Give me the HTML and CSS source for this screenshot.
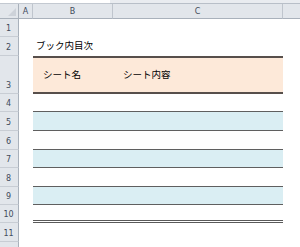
FILE: index.html
```html
<!DOCTYPE html>
<html lang="ja">
<head>
<meta charset="utf-8">
<link rel="stylesheet" href="styles.css">
</head>
<body>
<div class="sheet">
  <div class="topbar"><div class="namebox"></div><div class="fbar"></div></div>
  <div class="row colhdr">
    <div class="hc corner"><span class="tri"></span></div>
    <div class="hc">A</div>
    <div class="hc">B</div>
    <div class="hc">C</div>
    <div class="hc last"></div>
  </div>
  <div class="row r18"><div class="rh">1</div><div></div><div></div><div></div><div></div></div>
  <div class="row r19"><div class="rh">2</div><div></div><div class="title">ブック内目次</div><div></div><div></div></div>
  <div class="row r38"><div class="rh rh3">3</div><div></div><div class="th">シート名</div><div class="th">シート内容</div><div></div></div>
  <div class="row r18"><div class="rh">4</div><div></div><div class="td"></div><div class="td"></div><div></div></div>
  <div class="row r19"><div class="rh">5</div><div></div><div class="td blue"></div><div class="td blue"></div><div></div></div>
  <div class="row r19"><div class="rh">6</div><div></div><div class="td"></div><div class="td"></div><div></div></div>
  <div class="row r18"><div class="rh">7</div><div></div><div class="td blue"></div><div class="td blue"></div><div></div></div>
  <div class="row r19"><div class="rh">8</div><div></div><div class="td"></div><div class="td"></div><div></div></div>
  <div class="row r18"><div class="rh">9</div><div></div><div class="td blue"></div><div class="td blue"></div><div></div></div>
  <div class="row r18"><div class="rh">10</div><div></div><div class="td end"></div><div class="td end"></div><div></div></div>
  <div class="row r19"><div class="rh">11</div><div></div><div></div><div></div><div></div></div>
  <div class="row r19"><div class="rh"></div><div></div><div></div><div></div><div></div></div>
</div>
</body>
</html>
```

FILE: styles.css
```css
html, body {
  margin: 0;
  padding: 0;
  background: #ffffff;
}
.sheet {
  width: 300px;
  height: 247px;
  overflow: hidden;
  font-family: "Noto Sans CJK JP", "DejaVu Sans", sans-serif;
}
.topbar {
  display: flex;
  height: 4px;
}
.namebox {
  width: 110px;
  box-sizing: border-box;
  background: #ffffff;
  border-bottom: 1px solid #c3c9d1;
}
.fbar {
  flex: 1;
  background: #e9ecf0;
  border-bottom: 1px solid #b8bfc8;
}
.row {
  display: grid;
  grid-template-columns: 19px 14px 80px 170px 1fr;
}
.colhdr {
  height: 15px;
}
.hc {
  box-sizing: border-box;
  background: #e2e6eb;
  border-right: 1px solid #bfc5cd;
  border-bottom: 1px solid #a9b1bb;
  font-family: "DejaVu Sans", sans-serif;
  font-size: 8px;
  color: #3f4b5b;
  display: flex;
  align-items: center;
  justify-content: center;
}
.hc.last {
  border-right: none;
}
.corner {
  position: relative;
  border-right-color: #a9b1bb;
}
.tri {
  position: absolute;
  right: 2px;
  bottom: 2px;
  width: 0;
  height: 0;
  border-left: 8px solid transparent;
  border-bottom: 8px solid #cdd2d9;
}
.r18 { height: 18px; }
.r19 { height: 19px; }
.r38 { height: 38px; }
.rh {
  box-sizing: border-box;
  background: #e2e6eb;
  border-right: 1px solid #a9b1bb;
  border-bottom: 1px solid #c8cdd4;
  font-family: "DejaVu Sans", sans-serif;
  font-size: 8px;
  color: #3f4b5b;
  display: flex;
  align-items: flex-end;
  justify-content: center;
  padding: 0 1px 3px 0;
}
.title {
  font-size: 9.5px;
  color: #000;
  display: flex;
  align-items: flex-end;
  padding: 0 0 4px 3px;
  white-space: nowrap;
}
.th {
  box-sizing: border-box;
  background: #fde9d9;
  border-top: 2px solid #574f4b;
  border-bottom: 2px solid #574f4b;
  font-size: 9.5px;
  color: #000;
  display: flex;
  align-items: center;
  padding: 0 0 3px 10px;
  white-space: nowrap;
}
.td {
  box-sizing: border-box;
  border-bottom: 1px solid #5f5f5f;
}
.td.blue {
  background: #daeef3;
}
.td.end {
  border-bottom: 3px double #5a5a5a;
}
```
